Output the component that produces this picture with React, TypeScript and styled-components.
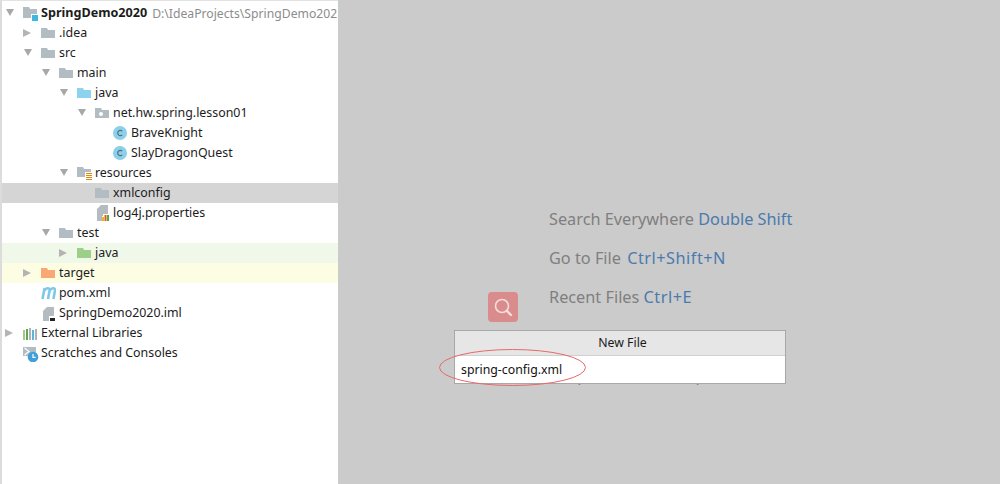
import React from "react";
import styled, { createGlobalStyle } from "styled-components";

const GlobalStyle = createGlobalStyle`
  html, body {
    margin: 0;
    padding: 0;
    width: 1000px;
    height: 484px;
    overflow: hidden;
    background: #cbcbcb;
  }
`;

const Page = styled.div`
  position: relative;
  width: 1000px;
  height: 484px;
  display: flex;
  overflow: hidden;
  font-family: "Noto Sans", "Noto Sans CJK SC", sans-serif;
`;

const Sidebar = styled.div`
  position: relative;
  width: 338px;
  height: 484px;
  flex: none;
  padding-top: 2px;
  box-sizing: border-box;
  background: #ffffff;
  border-left: 2px solid #dcdcdc;
  border-top: 1px solid #e2e2e2;
  overflow: hidden;
`;

const ScrollMark = styled.div`
  position: absolute;
  left: -2px;
  top: -1px;
  width: 2px;
  height: 61px;
  background: #c6c6c6;
`;

const Row = styled.div<{ $depth: number; $bg?: string }>`
  height: 20px;
  display: flex;
  align-items: center;
  padding-left: ${(p) => 3 + p.$depth * 18}px;
  background: ${(p) => p.$bg || "transparent"};
  white-space: nowrap;
`;

const ArrowSlot = styled.div`
  width: 18px;
  height: 20px;
  flex: none;
  display: flex;
  align-items: center;
`;

const IconSlot = styled.div`
  width: 18px;
  height: 20px;
  flex: none;
  display: flex;
  align-items: center;
`;

const Label = styled.span<{ $bold?: boolean }>`
  font-size: ${(p) => (p.$bold ? 12.6 : 12.4)}px;
  line-height: 20px;
  color: #1c1c1c;
  font-weight: ${(p) => (p.$bold ? 700 : 400)};
`;

const Hint = styled.span`
  font-size: 12.2px;
  color: #8c8c8c;
  margin-left: 5px;
`;

const Arrow = ({ open }: { open: boolean }) => (
  <svg width="12" height="12" viewBox="0 0 12 12">
    {open ? (
      <polygon points="1,2 9,2 5,9" fill="#a8a8a8" />
    ) : (
      <polygon points="0,2 8,6 0,10" fill="#b4b4b4" />
    )}
  </svg>
);

const FOLDER = "M0 2 H6 L7 4 H14 V12 H0 Z";

const Folder = ({ color }: { color: string }) => (
  <svg width="14" height="14" viewBox="0 0 14 14">
    <path d={FOLDER} fill={color} />
  </svg>
);

const PackageIcon = () => (
  <svg width="14" height="14" viewBox="0 0 14 14">
    <path d={FOLDER} fill="#b2bcc3" />
    <circle cx="6" cy="8" r="2" fill="#ffffff" />
  </svg>
);

const ModuleIcon = () => (
  <svg width="15" height="16" viewBox="0 0 15 16">
    <path d="M0 2 H6 L7 4 H14 V13 H0 Z" fill="#b2bcc3" />
    <rect x="8" y="9" width="7" height="7" fill="#ffffff" />
    <rect x="9" y="10" width="6" height="6" fill="#40b6e0" />
  </svg>
);

const ResourcesIcon = () => (
  <svg width="15" height="18" viewBox="0 0 15 18">
    <path d="M0 3 H6 L7 5 H14 V13 H0 Z" fill="#b2bcc3" />
    <rect x="8" y="8" width="7" height="10" fill="#ffffff" />
    <rect x="9" y="9" width="6" height="1" fill="#e8870a" />
    <rect x="9" y="11" width="6" height="1" fill="#e8870a" />
    <rect x="9" y="13" width="6" height="1" fill="#e8870a" />
    <rect x="9" y="15" width="6" height="1" fill="#e8870a" />
  </svg>
);

const ClassIcon = () => (
  <svg width="14" height="14" viewBox="0 0 14 14">
    <circle cx="7" cy="7" r="7" fill="#8ccfe8" />
    <path d="M9.2 5.2 A2.6 2.6 0 1 0 9.2 8.8" fill="none" stroke="#4d6f82" strokeWidth="1.2" />
  </svg>
);

const MavenIcon = () => (
  <svg width="15" height="14" viewBox="0 0 15 14">
    <path
      d="M1.5 13 L3.6 2 M3.2 5 C5 1.5 9.2 1.5 8.6 4.5 L7 13 M8.6 5 C10.4 1.5 14.6 1.5 14 4.5 L12.4 13"
      fill="none"
      stroke="#7fc8e8"
      strokeWidth="2.6"
    />
  </svg>
);

const PropertiesIcon = () => (
  <svg width="15" height="16" viewBox="0 0 15 16">
    <path d="M6 0 H13 V9 H8 V16 H2 V4 Z" fill="#b4bcc2" />
    <rect x="7" y="11" width="7" height="5" fill="#ffffff" />
    <rect x="7" y="12" width="2" height="4" fill="#f0b41e" />
    <rect x="9.5" y="10" width="2" height="6" fill="#e8561c" />
    <rect x="12" y="10" width="2" height="6" fill="#58a83a" />
  </svg>
);

const ImlIcon = () => (
  <svg width="15" height="16" viewBox="0 0 15 16">
    <path d="M6 2 H13 V11 H9 V16 H2 V6 Z" fill="#b4bcc2" />
    <rect x="8" y="11" width="7" height="5" fill="#ffffff" />
    <rect x="9" y="13" width="5" height="3" fill="#222222" />
  </svg>
);

const LibrariesIcon = () => (
  <svg width="15" height="14" viewBox="0 0 15 14">
    <rect x="0" y="4" width="2" height="10" fill="#a3c68f" />
    <rect x="3" y="3" width="2" height="11" fill="#62a54d" />
    <rect x="6" y="2" width="2" height="12" fill="#a9b4bb" />
    <rect x="9" y="4" width="2" height="10" fill="#5fb4dc" />
    <rect x="12" y="3" width="2" height="11" fill="#a9b4bb" />
  </svg>
);

const ScratchesIcon = () => (
  <svg width="16" height="18" viewBox="0 0 16 18">
    <rect x="0" y="3" width="13" height="9" fill="#b2bcc3" />
    <path d="M1.5 4 L6 7.5 L1.5 11" fill="none" stroke="#ffffff" strokeWidth="1.2" />
    <circle cx="10" cy="13" r="5.3" fill="#3f9fd8" />
    <path d="M10 10 V13.3 H12.6" fill="none" stroke="#ffffff" strokeWidth="1.2" />
  </svg>
);

type Node = {
  depth: number;
  arrow?: "open" | "closed";
  icon: React.ReactNode;
  label: string;
  bold?: boolean;
  hint?: string;
  bg?: string;
};

const GRAY = "#b2bcc3";

const nodes: Node[] = [
  { depth: 0, arrow: "open", icon: <ModuleIcon />, label: "SpringDemo2020", bold: true, hint: "D:\\IdeaProjects\\SpringDemo202" },
  { depth: 1, arrow: "closed", icon: <Folder color={GRAY} />, label: ".idea" },
  { depth: 1, arrow: "open", icon: <Folder color={GRAY} />, label: "src" },
  { depth: 2, arrow: "open", icon: <Folder color={GRAY} />, label: "main" },
  { depth: 3, arrow: "open", icon: <Folder color="#8ed3ed" />, label: "java" },
  { depth: 4, arrow: "open", icon: <PackageIcon />, label: "net.hw.spring.lesson01" },
  { depth: 5, icon: <ClassIcon />, label: "BraveKnight" },
  { depth: 5, icon: <ClassIcon />, label: "SlayDragonQuest" },
  { depth: 3, arrow: "open", icon: <ResourcesIcon />, label: "resources" },
  { depth: 4, icon: <Folder color={GRAY} />, label: "xmlconfig", bg: "#d5d5d5" },
  { depth: 4, icon: <PropertiesIcon />, label: "log4j.properties" },
  { depth: 2, arrow: "open", icon: <Folder color={GRAY} />, label: "test" },
  { depth: 3, arrow: "closed", icon: <Folder color="#9ccf87" />, label: "java", bg: "#f0f9e9" },
  { depth: 1, arrow: "closed", icon: <Folder color="#f9a875" />, label: "target", bg: "#fdfde3" },
  { depth: 1, icon: <MavenIcon />, label: "pom.xml" },
  { depth: 1, icon: <ImlIcon />, label: "SpringDemo2020.iml" },
  { depth: 0, arrow: "closed", icon: <LibrariesIcon />, label: "External Libraries" },
  { depth: 0, icon: <ScratchesIcon />, label: "Scratches and Consoles" },
];

const Editor = styled.div`
  flex: 1;
  padding: 200px 0 0 211px;
  background: #cbcbcb;
`;

const HintLine = styled.div`
  height: 39px;
  line-height: 39px;
  font-size: 16.3px;
  color: #7f7f7f;
  white-space: nowrap;
`;

const Shortcut = styled.span<{ $wide?: boolean; $gap?: number }>`
  color: #4a7aae;
  letter-spacing: ${(p) => (p.$wide ? 0.5 : 0)}px;
  margin-left: ${(p) => p.$gap || 0}px;
`;

const SearchBadge = styled.div`
  position: absolute;
  left: 488px;
  top: 292px;
  width: 30px;
  height: 30px;
  border-radius: 4px;
  background: #da8b8b;
  display: flex;
  align-items: center;
  justify-content: center;
`;

const Dialog = styled.div`
  position: absolute;
  left: 454px;
  top: 330px;
  width: 332px;
  height: 54px;
  box-sizing: border-box;
  border: 1px solid #a8a8a8;
  background: #ffffff;
`;

const DialogTitle = styled.div`
  height: 24px;
  line-height: 24px;
  padding-left: 5px;
  text-align: center;
  font-size: 12.3px;
  color: #1a1a1a;
  background: #e6e6e6;
  border-bottom: 1px solid #d0d0d0;
`;

const DialogInput = styled.div`
  height: 28px;
  line-height: 28px;
  padding-left: 6px;
  font-size: 12.3px;
  color: #111111;
`;

const Annotation = styled.svg`
  position: absolute;
  left: 437px;
  top: 347px;
`;

const App: React.FC = () => {
  return (
    <Page>
      <GlobalStyle />
      <Sidebar>
        <ScrollMark />
        {nodes.map((n, i) => (
          <Row key={i} $depth={n.depth} $bg={n.bg}>
            <ArrowSlot>{n.arrow && <Arrow open={n.arrow === "open"} />}</ArrowSlot>
            <IconSlot>{n.icon}</IconSlot>
            <Label $bold={n.bold}>{n.label}</Label>
            {n.hint && <Hint>{n.hint}</Hint>}
          </Row>
        ))}
      </Sidebar>
      <Editor>
        <HintLine>
          Search Everywhere <Shortcut>Double Shift</Shortcut>
        </HintLine>
        <HintLine>
          Go to File <Shortcut $wide $gap={2}>Ctrl+Shift+N</Shortcut>
        </HintLine>
        <HintLine>
          Recent Files <Shortcut $wide>Ctrl+E</Shortcut>
        </HintLine>
        <HintLine>
          Navigation Bar <Shortcut>Alt+Home</Shortcut>
        </HintLine>
        <HintLine>Drop files here to open</HintLine>
      </Editor>
      <SearchBadge>
        <svg width="22" height="22" viewBox="0 0 22 22">
          <circle cx="10" cy="10" r="6.5" fill="none" stroke="#f3dede" strokeWidth="1.6" />
          <path d="M15 15 L19 19" stroke="#f3dede" strokeWidth="2.4" strokeLinecap="round" />
        </svg>
      </SearchBadge>
      <Dialog>
        <DialogTitle>New File</DialogTitle>
        <DialogInput>spring-config.xml</DialogInput>
      </Dialog>
      <Annotation width="152" height="42" viewBox="0 0 152 42">
        <ellipse cx="75.5" cy="20.5" rx="73" ry="18" fill="none" stroke="#e8696b" strokeWidth="1" />
      </Annotation>
    </Page>
  );
};

export default App;
